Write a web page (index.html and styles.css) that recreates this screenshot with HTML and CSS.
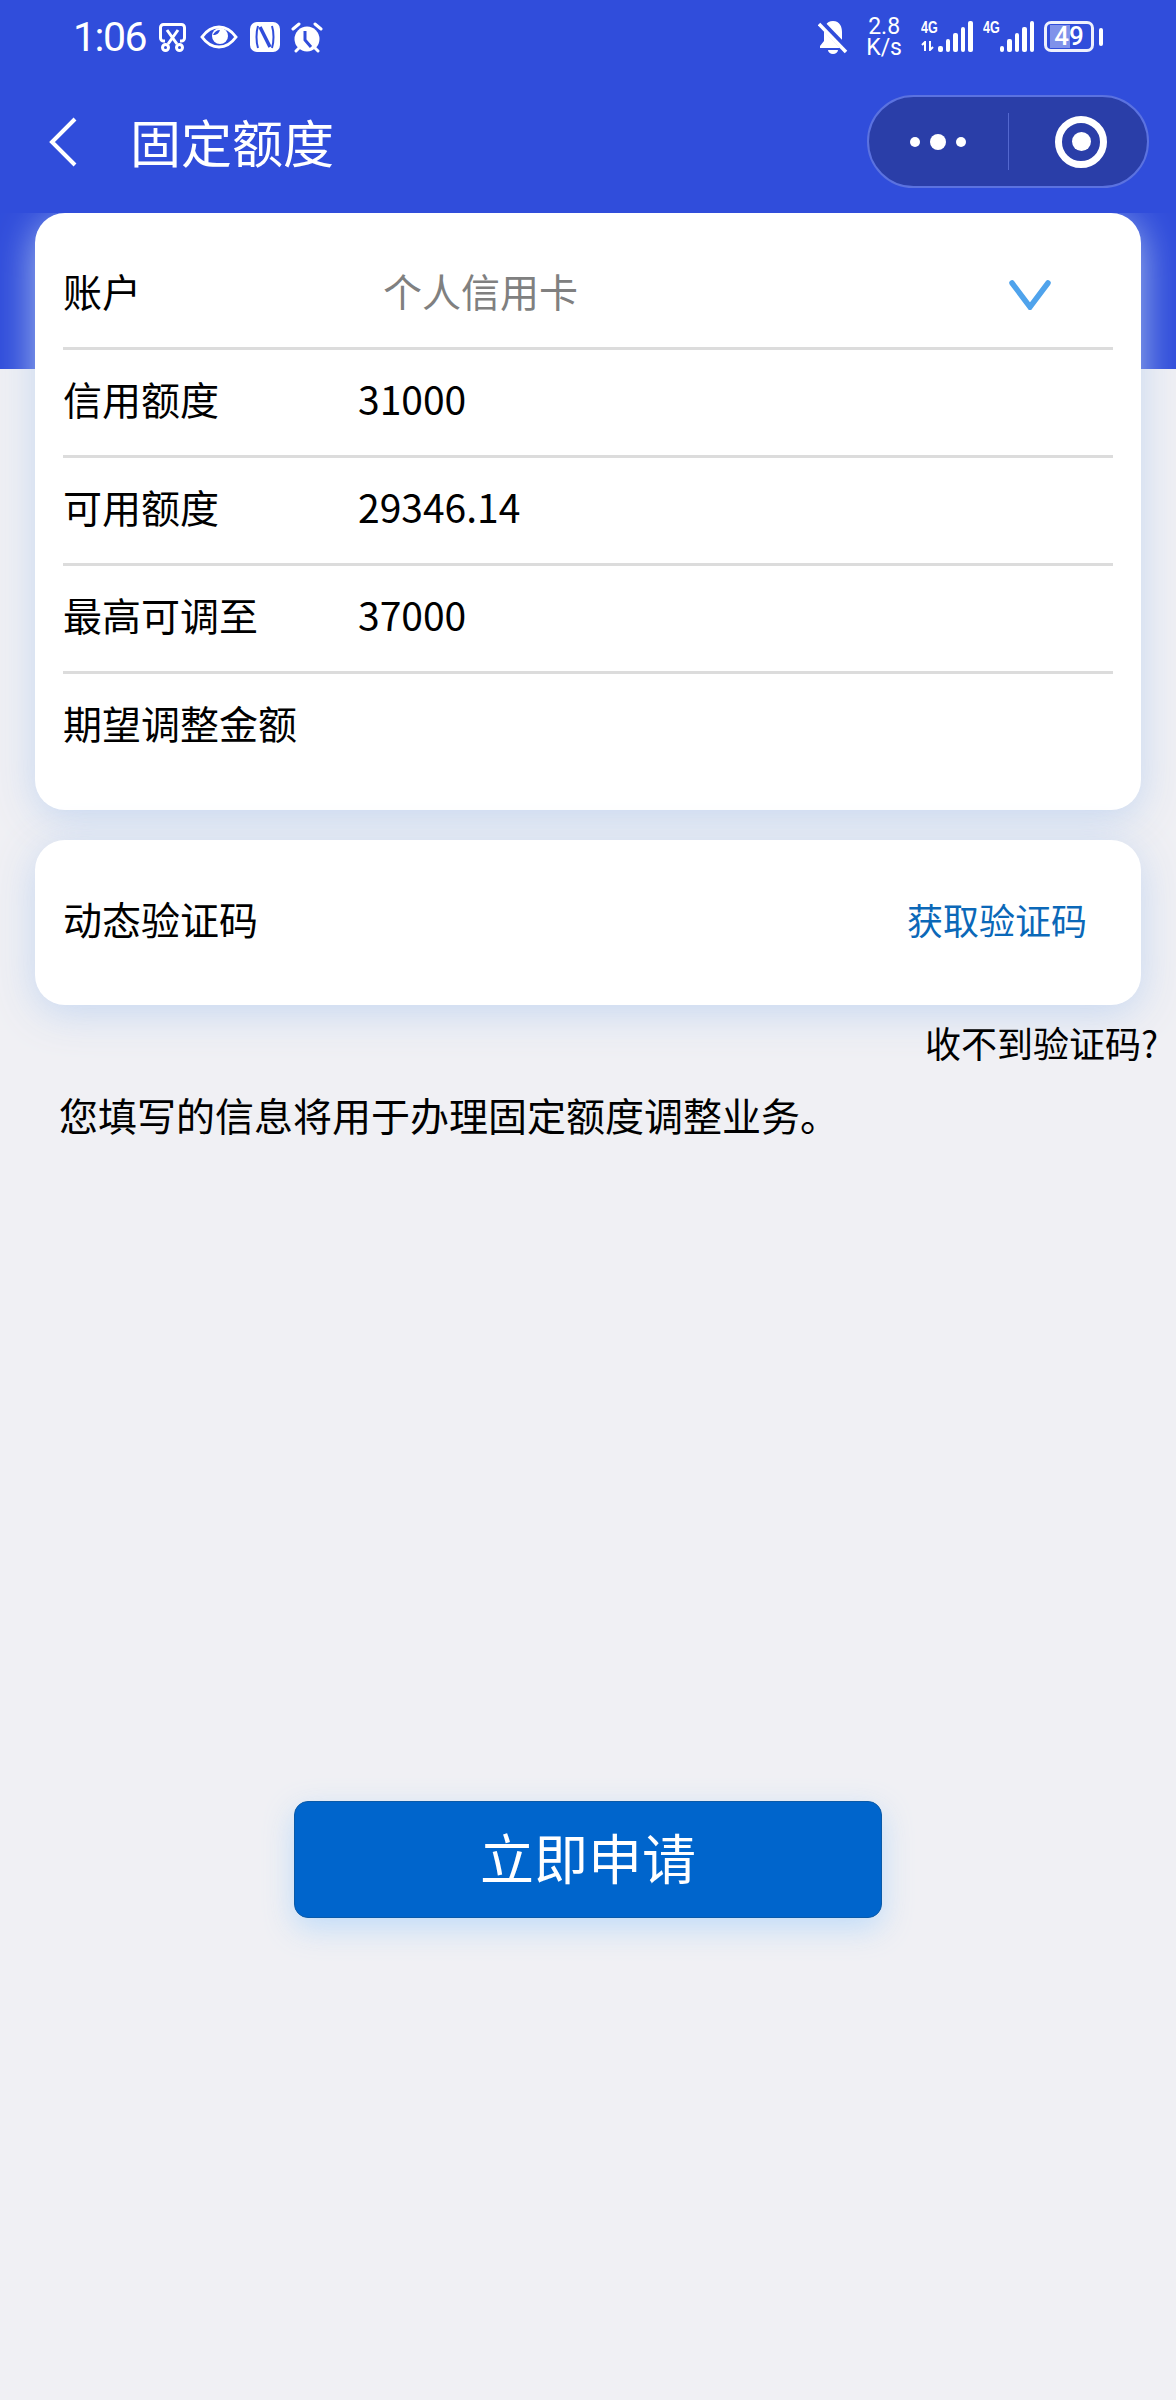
FILE: index.html
```html
<!DOCTYPE html>
<html lang="zh-CN">
<head>
    <meta charset="UTF-8">
    <meta name="viewport" content="width=device-width, initial-scale=1.0">
    <title>固定额度</title>
    <link rel="stylesheet" href="styles.css">
</head>
<body>
    <div class="header">
        <div class="status-bar">
            <div class="status-left">
                <span class="time">1:06</span>
                <svg class="icon-cut" width="27" height="29" viewBox="0 0 27 29" fill="none" stroke="#fff" stroke-width="3"><path d="M6 18H4.500a3 3 0 0 1-3-3V4.500a3 3 0 0 1 3-3h18a3 3 0 0 1 3 3V15a3 3 0 0 1-3 3H21"/><path d="M8 7l10 14M19 7L9 21"/><circle cx="6.500" cy="24.500" r="3"/><circle cx="20.500" cy="24.500" r="3"/></svg>
                <svg class="icon-eye" width="38" height="24" viewBox="0 0 38 24" fill="none"><path d="M2 12C7 5 13 2 19 2s12 3 17 10c-5 7-11 10-17 10S7 19 2 12z" stroke="#fff" stroke-width="3"/><circle cx="20" cy="11" r="8" fill="#fff"/><path d="M13 10c1-3 4-5 7-5-1 3-3 5-7 5z" fill="#304ddb"/></svg>
                <svg class="icon-nfc" width="30" height="30" viewBox="0 0 30 30"><rect width="30" height="30" rx="7" fill="#fff"/><path d="M8 4c-2 6-2 16 0 22M22 4c2 6 2 16 0 22" fill="none" stroke="#304ddb" stroke-width="2"/><path d="M10 5l10 20" stroke="#304ddb" stroke-width="3.500"/></svg>
                <svg class="icon-alarm" width="32" height="31" viewBox="0 0 32 31"><circle cx="16" cy="17" r="12.500" fill="#fff"/><path d="M2 7l6-5M30 7l-6-5M5 29l3-3M27 29l-3-3" stroke="#fff" stroke-width="3" stroke-linecap="round"/><path d="M14 9v9l6 7" fill="none" stroke="#304ddb" stroke-width="3"/></svg>
            </div>
            <div class="status-right">
                <svg class="icon-bell" width="30" height="34" viewBox="0 0 30 34"><path d="M15 1C8 1 6 7 6 12v9l-4 5v2h26v-2l-4-5v-9c0-5-2-11-9-11z" fill="#fff"/><path d="M10 30a5 4 0 0 0 10 0z" fill="#fff"/><path d="M0 0l30 31" stroke="#304ddb" stroke-width="7"/><path d="M1 4l27 28" stroke="#fff" stroke-width="3.500"/></svg>
                <div class="net-speed"><span>2.8</span><span>K/s</span></div>
                <div class="signal signal-first">
                    <div class="signal-labels">
                        <span class="network">4G</span>
                        <svg class="arrows" width="14" height="10" viewBox="0 0 14 10" fill="none" stroke="#fff" stroke-width="2"><path d="M4 10V1L1 4M9 0v9l3-3"/></svg>
                    </div>
                    <div class="bars"><i class="b1"></i><i class="b2"></i><i class="b3"></i><i class="b4"></i><i class="b5"></i></div>
                </div>
                <div class="signal">
                    <div class="signal-labels"><span class="network">4G</span></div>
                    <div class="bars"><i class="b1"></i><i class="b2"></i><i class="b3"></i><i class="b4"></i><i class="b5"></i></div>
                </div>
                <div class="battery">
                    <div class="battery-body"><span class="battery-fill"></span><span class="battery-num">49</span></div>
                    <div class="battery-tip"></div>
                </div>
            </div>
        </div>
        <div class="nav-bar">
            <svg class="back" width="30" height="50" viewBox="0 0 30 50" fill="none" stroke="#fff" stroke-width="4"><path d="M27 2L4 25l23 23"/></svg>
            <h1 class="nav-title">固定额度</h1>
            <div class="capsule">
                <div class="capsule-more"><i class="dot"></i><i class="dot dot-big"></i><i class="dot"></i></div>
                <div class="capsule-close"><span class="target"></span></div>
            </div>
        </div>
    </div>
    <div class="header-ext"></div>

    <div class="content">
        <div class="card card-main">
            <div class="row">
                <span class="label">账户</span>
                <span class="select-value">个人信用卡</span>
                <svg class="chevron" width="42" height="30" viewBox="0 0 42 30" fill="none" stroke="#4fa3ec" stroke-width="5.500" stroke-linecap="round"><path d="M3 3l18 24L39 3"/></svg>
            </div>
            <div class="row"><span class="label">信用额度</span><span class="value">31000</span></div>
            <div class="row"><span class="label">可用额度</span><span class="value">29346.14</span></div>
            <div class="row"><span class="label">最高可调至</span><span class="value">37000</span></div>
            <div class="row row-last"><span class="label">期望调整金额</span></div>
        </div>

        <div class="card card-code">
            <span class="code-label">动态验证码</span>
            <span class="get-code">获取验证码</span>
        </div>

        <div class="no-code">收不到验证码?</div>
        <p class="notice">您填写的信息将用于办理固定额度调整业务。</p>

        <div class="submit-wrap"><button class="submit">立即申请</button></div>
    </div>
</body>
</html>
```

FILE: styles.css
```css
* {
    box-sizing: border-box;
}
body {
    margin: 0;
    height: 2400px;
    overflow: hidden;
    background-color: #f0f0f4;
    font-family: "Noto Sans CJK SC", "Noto Sans", sans-serif;
    color: #000;
}
.header {
    position: relative;
    z-index: 1;
    background-color: #304ddb;
    color: #fff;
    height: 213px;
}
.header-ext {
    height: 156px;
    background-color: #304ddb;
}
.status-bar {
    height: 70px;
    padding: 16px 73px 0 73px;
    display: flex;
    justify-content: space-between;
}
.status-left {
    display: flex;
    align-items: center;
    height: 42px;
}
.time {
    font-family: Roboto, sans-serif;
    font-size: 41px;
    line-height: 42px;
    letter-spacing: -1.500px;
    width: 86px;
}
.icon-eye {
    margin-left: 14px;
}
.icon-nfc {
    margin-left: 12px;
}
.icon-alarm {
    margin-left: 11px;
}
.status-right {
    display: flex;
    align-items: center;
    height: 41px;
}
.net-speed {
    display: flex;
    flex-direction: column;
    align-items: center;
    font-family: Roboto, sans-serif;
    font-size: 23px;
    line-height: 21px;
    margin-left: 18px;
}
.signal {
    display: flex;
    margin-left: 10px;
    height: 31px;
}
.signal-first {
    margin-left: 19px;
}
.signal-labels {
    display: flex;
    flex-direction: column;
    height: 31px;
    width: 17px;
}
.network {
    font-family: "Liberation Sans", sans-serif;
    font-weight: bold;
    font-size: 17px;
    line-height: 14px;
    transform: scaleX(0.74);
    transform-origin: left center;
}
.arrows {
    display: block;
    margin-top: 6px;
}
.bars {
    display: flex;
    align-items: flex-end;
    gap: 3px;
}
.bars i {
    display: block;
    width: 4.500px;
    background-color: #fff;
    border-radius: 2px;
}
.b1 { height: 6px; }
.b2 { height: 13px; }
.b3 { height: 19px; }
.b4 { height: 25px; }
.b5 { height: 31px; }
.battery {
    display: flex;
    align-items: center;
    margin-left: 10px;
}
.battery-body {
    position: relative;
    width: 50px;
    height: 31px;
    border: 3px solid #eef0fc;
    border-radius: 7px;
}
.battery-fill {
    position: absolute;
    left: 3px;
    top: 1px;
    bottom: 1px;
    width: 20px;
    background-color: #7f92ea;
}
.battery-num {
    position: absolute;
    left: 0;
    right: 0;
    top: 0;
    text-align: center;
    font-family: Roboto, sans-serif;
    font-weight: 500;
    font-size: 26px;
    line-height: 25px;
}
.battery-tip {
    width: 4px;
    height: 18px;
    margin-left: 5px;
    background-color: #fff;
    border-radius: 2px;
}
.nav-bar {
    display: flex;
    align-items: center;
    height: 93px;
    margin-top: 25px;
    padding: 0 27px 0 48px;
}
.back {
    display: block;
}
.nav-title {
    margin: 0 0 2px 52px;
    flex: 1;
    font-size: 51px;
    font-weight: normal;
    line-height: 60px;
}
.capsule {
    display: flex;
    align-items: center;
    width: 282px;
    height: 93px;
    background-color: #2a3ea8;
    border: 2px solid #5b72e0;
    border-radius: 47px;
}
.capsule-more {
    width: 140px;
    height: 57px;
    display: flex;
    align-items: center;
    justify-content: center;
    gap: 10px;
    padding-right: 2px;
    border-right: 1px solid #5468cf;
}
.dot {
    width: 10px;
    height: 10px;
    background-color: #fff;
    border-radius: 50%;
}
.dot-big {
    width: 16px;
    height: 16px;
}
.capsule-close {
    flex: 1;
    display: flex;
    justify-content: center;
    padding-left: 6px;
}
.target {
    width: 52px;
    height: 52px;
    border: 7px solid #fff;
    border-radius: 50%;
    display: flex;
    align-items: center;
    justify-content: center;
}
.target::after {
    content: "";
    width: 19px;
    height: 19px;
    background-color: #fff;
    border-radius: 50%;
}
.content {
    margin-top: -156px;
    padding: 0 35px;
}
.card {
    background-color: #fff;
    border-radius: 30px;
    box-shadow: 0 8px 40px rgba(190, 210, 240, 0.85);
}
.card-main {
    height: 597px;
    padding: 29px 28px 0;
}
.row {
    height: 108px;
    padding-bottom: 9px;
    display: flex;
    align-items: center;
    border-bottom: 3px solid #dcdcdc;
    font-size: 39px;
}
.row-last {
    padding-bottom: 12px;
    border-bottom: none;
}
.label {
    width: 295px;
    flex-shrink: 0;
}
.select-value {
    color: #808080;
    margin-left: 25px;
    flex: 1;
}
.chevron {
    display: block;
    margin: 9px 62px 0 0;
}
.card-code {
    margin-top: 30px;
    height: 165px;
    padding: 0 54px 10px 28px;
    display: flex;
    align-items: center;
    justify-content: space-between;
}
.code-label {
    font-size: 39px;
}
.get-code {
    color: #0b68b8;
    font-size: 36px;
    margin-top: 3px;
}
.no-code {
    text-align: right;
    font-size: 36px;
    line-height: 50px;
    margin-top: 12px;
    margin-right: -17px;
}
.notice {
    margin: 22px 0 0 24px;
    font-size: 39px;
    line-height: 50px;
}
.submit-wrap {
    display: flex;
    justify-content: center;
    margin-top: 662px;
}
.submit {
    width: 588px;
    height: 117px;
    padding: 0 0 6px;
    background-color: #0065cc;
    border: 1px solid #0a5aa8;
    border-radius: 14px;
    color: #fff;
    font-family: inherit;
    font-size: 54px;
    box-shadow: 0 10px 30px rgba(180, 215, 250, 0.8);
}
```
